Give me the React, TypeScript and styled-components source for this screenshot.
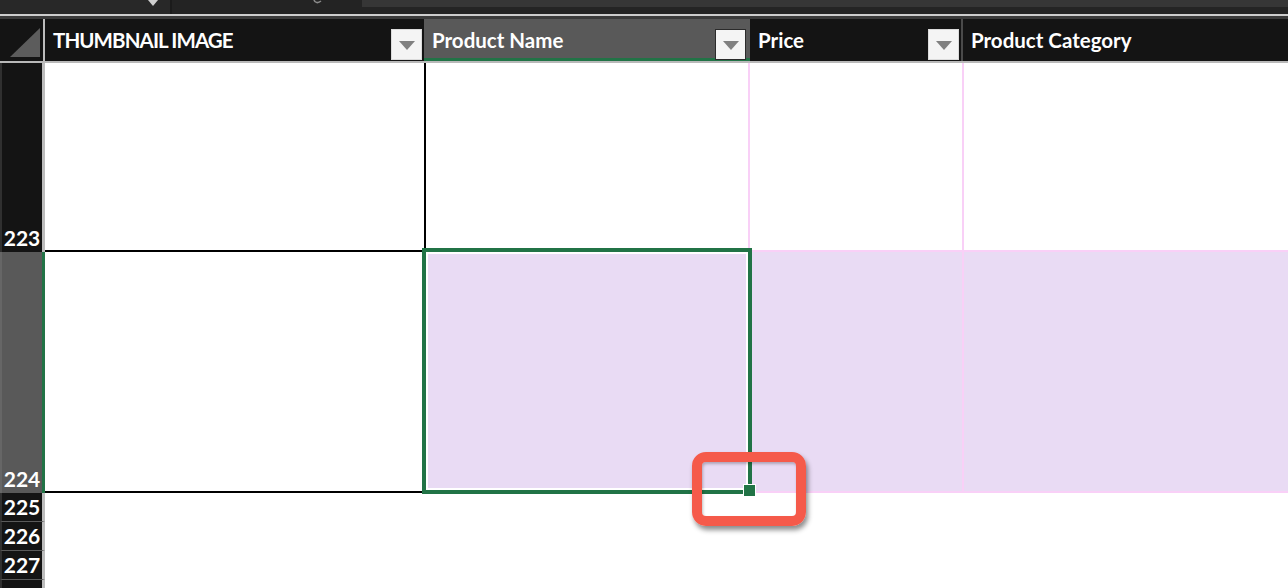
import React from "react";
import styled, { createGlobalStyle } from "styled-components";

const GlobalStyle = createGlobalStyle`
  html, body {
    margin: 0;
    padding: 0;
    width: 1288px;
    height: 588px;
    overflow: hidden;
    background: #ffffff;
  }
  body {
    font-family: Lato, "Noto Sans", "Liberation Sans", sans-serif;
  }
  * { box-sizing: border-box; }
`;

const Sheet = styled.div`
  display: flex;
  flex-direction: column;
  width: 1288px;
  height: 588px;
  overflow: hidden;
  & > * { flex-shrink: 0; }
`;

const TopBar = styled.div`
  display: flex;
  height: 14px;
  background: #262626;
`;

const NameBox = styled.div`
  width: 170px;
  display: flex;
  justify-content: flex-end;
  align-items: flex-start;
  padding-right: 12px;
  background: #282828;
`;

const BarDivider = styled.div`
  width: 2px;
  background: #1b1b1b;
`;

const FxBox = styled.div`
  width: 188px;
  display: flex;
  justify-content: flex-end;
  align-items: flex-start;
  padding-right: 36px;
  background: #232323;
`;

const FormulaField = styled.div`
  flex: 1;
  display: flex;
  flex-direction: column;
  background: #242424;
`;

const FormulaInput = styled.div`
  height: 7px;
  margin-left: 2px;
  background: #363636;
`;

const Splitter = styled.div`
  height: 5px;
  border-top: 2px solid #cdcdcd;
  background: #3b3b3b;
`;

const HeaderRow = styled.div`
  display: grid;
  grid-template-columns: 45px 379px 326px 213px 1fr;
  height: 44px;
  border-bottom: 2px solid #b9b9b9;
  background: #141414;
`;

const CornerCell = styled.div`
  display: flex;
  align-items: flex-end;
  padding: 0 0 4px 10px;
  background: #141414;
  border-right: 2px solid #bdbdbd;
`;

const ColHeader = styled.div<{ $active?: boolean; $sep?: boolean }>`
  display: flex;
  align-items: center;
  min-width: 0;
  padding: 0 ${(p) => (p.$active ? 4 : 2)}px 0 8px;
  background: ${(p) => (p.$active ? "#595959" : "#141414")};
  box-shadow: ${(p) => (p.$active ? "inset 0 -3px 0 #217346" : "none")};
  border-right: ${(p) => (p.$sep ? "2px solid #4a4a4a" : "none")};
  color: #ffffff;
  font-size: 20.5px;
  font-weight: 700;
  white-space: nowrap;
  overflow: hidden;
`;

const HeaderLabel = styled.span<{ $caps?: boolean }>`
  flex: 1;
  letter-spacing: ${(p) => (p.$caps ? "-0.9px" : "0")};
`;

const FilterButton = styled.div<{ $dark?: boolean }>`
  width: 31px;
  height: 31px;
  align-self: flex-end;
  margin-bottom: 1px;
  display: flex;
  align-items: center;
  justify-content: center;
  padding-top: 2px;
  background: #f4f4f4;
  border: 1px solid ${(p) => (p.$dark ? "#2b2b2b" : "#dcdcdc")};
  flex-shrink: 0;
`;

const Body = styled.div`
  position: relative;
  display: flex;
  flex-direction: column;
  & > * { flex-shrink: 0; }
`;

const Row = styled.div<{ $h: number }>`
  display: grid;
  grid-template-columns: 45px 381px 324px 214px 1fr;
  height: ${(p) => p.$h}px;
`;

const RowHeader = styled.div<{ $active?: boolean; $line?: boolean }>`
  display: flex;
  align-items: flex-end;
  justify-content: center;
  padding-bottom: 4px;
  background: ${(p) => (p.$active ? "#595959" : "#141414")};
  border-left: 2px solid ${(p) => (p.$active ? "#666666" : "#303030")};
  border-right: 3px solid ${(p) => (p.$active ? "#217346" : "#bdbdbd")};
  border-bottom: ${(p) => (p.$line ? "1px solid #5a5a5a" : "none")};
  color: #ffffff;
  font-size: 21px;
  font-weight: 700;
  line-height: 1;
`;

const Cell = styled.div<{
  $right?: string;
  $bottom?: string;
  $fill?: string;
}>`
  position: relative;
  background: ${(p) => p.$fill || "#ffffff"};
  border-right: ${(p) => (p.$right ? `2px solid ${p.$right}` : "none")};
  border-bottom: ${(p) => (p.$bottom ? `2px solid ${p.$bottom}` : "none")};
`;

const Selection = styled.div`
  position: absolute;
  top: -4px;
  left: -4px;
  right: -2px;
  bottom: -1px;
  border: 4px solid #217346;
  box-shadow: inset 0 0 0 2px #ffffff;
  z-index: 2;
  pointer-events: none;
`;

const FillHandle = styled.div`
  position: absolute;
  left: 318px;
  top: 233px;
  width: 11px;
  height: 11px;
  background: #217346;
  outline: 1px solid #ffffff;
  z-index: 3;
`;

const Callout = styled.div`
  position: absolute;
  left: 692px;
  top: 389px;
  width: 114px;
  height: 74px;
  border: 10px solid #f55a4a;
  border-radius: 14px;
  box-shadow: 2px 4px 5px rgba(0, 0, 0, 0.45),
    inset 1px 2px 3px rgba(0, 0, 0, 0.25);
  z-index: 4;
`;

const Caret = () => (
  <svg width="10" height="6" viewBox="0 0 10 6">
    <polygon points="0,0 10,0 5,6" fill="#cfcfcf" />
  </svg>
);

const FxHook = () => (
  <svg width="12" height="4" viewBox="0 0 12 4">
    <path d="M2 0 C3 3 6 3.5 9 1" stroke="#8a8a8a" strokeWidth="1.6" fill="none" />
  </svg>
);

const CornerMark = () => (
  <svg width="30" height="29" viewBox="0 0 30 29">
    <polygon points="30,0 30,29 0,29" fill="#5c5c5c" />
  </svg>
);

const FilterArrow = () => (
  <svg width="16" height="9" viewBox="0 0 16 9">
    <polygon points="0,0 16,0 8,9" fill="#808080" />
  </svg>
);

const PINK = "#f9d0f7";
const LAVENDER = "#e9dbf4";

const columns = [
  { label: "THUMBNAIL IMAGE", filter: true, caps: true },
  { label: "Product Name", filter: true, active: true },
  { label: "Price", filter: true, sep: true },
  { label: "Product Category", filter: false },
];

export default function App() {
  return (
    <>
      <GlobalStyle />
      <Sheet>
        <TopBar>
          <NameBox>
            <Caret />
          </NameBox>
          <BarDivider />
          <FxBox>
            <FxHook />
          </FxBox>
          <FormulaField>
            <FormulaInput />
          </FormulaField>
        </TopBar>
        <Splitter />
        <HeaderRow>
          <CornerCell>
            <CornerMark />
          </CornerCell>
          {columns.map((c) => (
            <ColHeader key={c.label} $active={c.active} $sep={c.sep}>
              <HeaderLabel $caps={c.caps}>{c.label}</HeaderLabel>
              {c.filter && (
                <FilterButton $dark={c.active}>
                  <FilterArrow />
                </FilterButton>
              )}
            </ColHeader>
          ))}
        </HeaderRow>
        <Body>
          <Row $h={189}>
            <RowHeader>223</RowHeader>
            <Cell $right="#000000" $bottom="#000000" />
            <Cell $right={PINK} />
            <Cell $right={PINK} $bottom={PINK} />
            <Cell $bottom={PINK} />
          </Row>
          <Row $h={241}>
            <RowHeader $active>224</RowHeader>
            <Cell $bottom="#000000" />
            <Cell $fill={LAVENDER}>
              <Selection />
              <FillHandle />
            </Cell>
            <Cell $fill={LAVENDER} $right={PINK} $bottom={PINK} />
            <Cell $fill={LAVENDER} $bottom={PINK} />
          </Row>
          {[225, 226, 227].map((n) => (
            <Row key={n} $h={29}>
              <RowHeader $line>{n}</RowHeader>
              <Cell />
              <Cell />
              <Cell />
              <Cell />
            </Row>
          ))}
          <Row $h={29}>
            <RowHeader $line />
            <Cell />
            <Cell />
            <Cell />
            <Cell />
          </Row>
          <Callout />
        </Body>
      </Sheet>
    </>
  );
}
